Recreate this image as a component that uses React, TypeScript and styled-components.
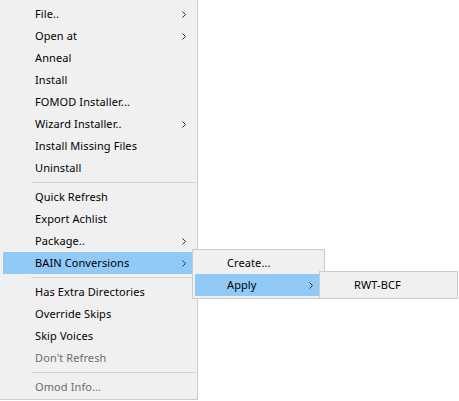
import React from "react";
import styled, { createGlobalStyle } from "styled-components";

const GlobalStyle = createGlobalStyle`
  html, body { margin: 0; padding: 0; background: #ffffff; }
  body { font-family: "Noto Sans", "Open Sans", sans-serif; font-size: 11px; color: #000; }
`;

const Page = styled.div`
  width: 459px;
  height: 401px;
  overflow: hidden;
  display: flex;
  align-items: flex-start;
`;

const Menu = styled.div<{ $width: number; $root?: boolean }>`
  position: ${(p) => (p.$root ? "relative" : "absolute")};
  width: ${(p) => p.$width}px;
  box-sizing: border-box;
  background: #f0f0f0;
  display: flex;
  flex-direction: column;
  ${(p) =>
    p.$root
      ? `
    padding: 3px 4px 1px 3px;
    border-right: 1px solid #cccccc;
    border-bottom: 1px solid #cccccc;
  `
      : `
    padding: 2px 4px 2px 2px;
    border: 1px solid #cccccc;
    top: -3px;
    left: calc(100% - 1px);
    z-index: 2;
  `}
`;

const Item = styled.div<{ $active?: boolean; $disabled?: boolean }>`
  position: relative;
  height: 22px;
  display: flex;
  align-items: center;
  padding-left: 32px;
  padding-right: 7px;
  white-space: nowrap;
  background: ${(p) => (p.$active ? "#91c9f7" : "transparent")};
  color: ${(p) => (p.$disabled ? "#6d6d6d" : "#000000")};
`;

const Label = styled.span`
  flex: 1;
  line-height: 22px;
  letter-spacing: 0.1px;
`;

const Separator = styled.div`
  height: 7px;
  display: flex;
  align-items: center;
  margin: 0 -3px 0 28px;
  &::after {
    content: "";
    flex: 1;
    height: 1px;
    background: #d4d4d4;
  }
`;

const Chevron = () => (
  <svg width="4" height="7" viewBox="0 0 4 7" style={{ display: "block" }}>
    <path d="M0.5 0.5 L3.5 3.5 L0.5 6.5" fill="none" stroke="#333333" strokeWidth="1" />
  </svg>
);

type Entry =
  | { type: "sep" }
  | { type: "item"; label: string; sub?: boolean; disabled?: boolean; active?: boolean; children?: React.ReactNode };

const renderEntries = (entries: Entry[]) =>
  entries.map((e, i) =>
    e.type === "sep" ? (
      <Separator key={i} />
    ) : (
      <Item key={i} $active={e.active} $disabled={e.disabled}>
        <Label>{e.label}</Label>
        {e.sub && <Chevron />}
        {e.children}
      </Item>
    )
  );

export default function App() {
  const applyMenu = (
    <Menu $width={139}>
      {renderEntries([{ type: "item", label: "RWT-BCF" }])}
    </Menu>
  );

  const bainMenu = (
    <Menu $width={133}>
      {renderEntries([
        { type: "item", label: "Create..." },
        { type: "item", label: "Apply", sub: true, active: true, children: applyMenu },
      ])}
    </Menu>
  );

  const entries: Entry[] = [
    { type: "item", label: "File..", sub: true },
    { type: "item", label: "Open at", sub: true },
    { type: "item", label: "Anneal" },
    { type: "item", label: "Install" },
    { type: "item", label: "FOMOD Installer..." },
    { type: "item", label: "Wizard Installer..", sub: true },
    { type: "item", label: "Install Missing Files" },
    { type: "item", label: "Uninstall" },
    { type: "sep" },
    { type: "item", label: "Quick Refresh" },
    { type: "item", label: "Export Achlist" },
    { type: "item", label: "Package..", sub: true },
    { type: "item", label: "BAIN Conversions", sub: true, active: true, children: bainMenu },
    { type: "sep" },
    { type: "item", label: "Has Extra Directories" },
    { type: "item", label: "Override Skips" },
    { type: "item", label: "Skip Voices" },
    { type: "item", label: "Don't Refresh", disabled: true },
    { type: "sep" },
    { type: "item", label: "Omod Info...", disabled: true },
  ];

  return (
    <>
      <GlobalStyle />
      <Page>
        <Menu $root $width={198}>
          {renderEntries(entries)}
        </Menu>
      </Page>
    </>
  );
}
